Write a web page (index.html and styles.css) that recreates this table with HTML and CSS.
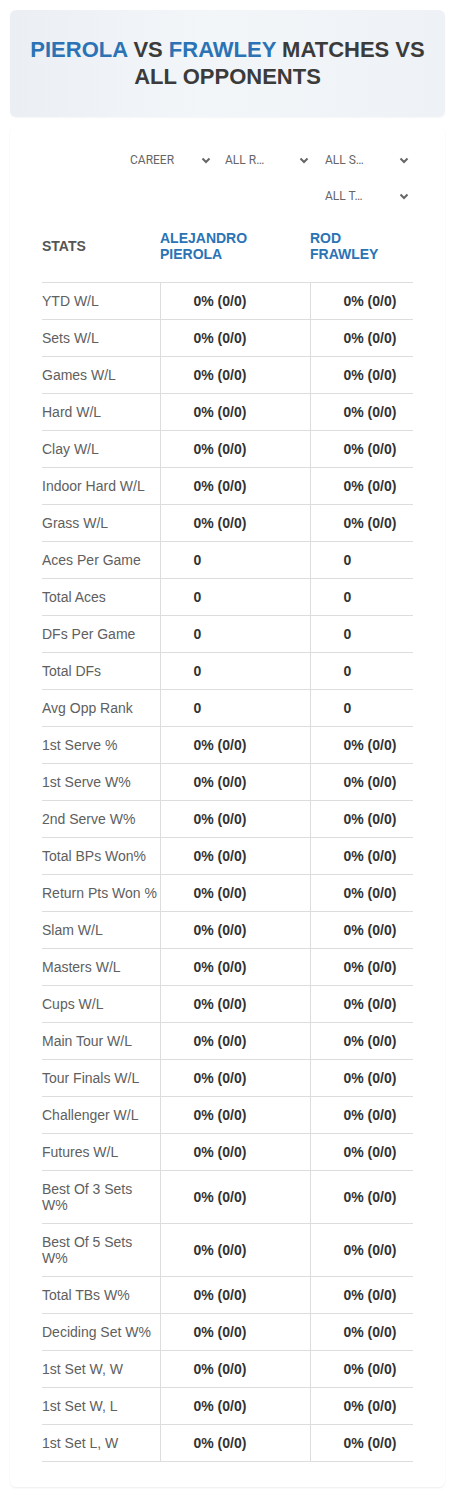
FILE: index.html
```html
<!DOCTYPE html>
<html>
<head>
	<title>Pierola vs Frawley</title>
	<link rel="stylesheet" href="styles.css">
</head>
<body>

	<div class="page-head">
		<h1 class="page-title"><span class="blue">PIEROLA</span> VS <span class="blue">FRAWLEY</span> MATCHES VS ALL OPPONENTS</h1>
	</div>

	<div class="stats-card">

		<div class="filters">
			<div class="filter filter-first">CAREER <svg class="chev" width="10" height="7" viewBox="0 0 10 7"><path d="M1.5 1.5 L5 5 L8.5 1.5" fill="none" stroke="#666" stroke-width="2"/></svg></div>
			<div class="filter">ALL R… <svg class="chev" width="10" height="7" viewBox="0 0 10 7"><path d="M1.5 1.5 L5 5 L8.5 1.5" fill="none" stroke="#666" stroke-width="2"/></svg></div>
			<div class="filter">ALL S… <svg class="chev" width="10" height="7" viewBox="0 0 10 7"><path d="M1.5 1.5 L5 5 L8.5 1.5" fill="none" stroke="#666" stroke-width="2"/></svg></div>
			<div class="filter">ALL T… <svg class="chev" width="10" height="7" viewBox="0 0 10 7"><path d="M1.5 1.5 L5 5 L8.5 1.5" fill="none" stroke="#666" stroke-width="2"/></svg></div>
		</div>

		<table class="stats-table">
			<colgroup>
				<col class="col-label">
				<col class="col-p1">
				<col class="col-p2">
			</colgroup>
			<thead>
				<tr>
					<th class="th-stats">STATS</th>
					<th class="th-player">ALEJANDRO<br>PIEROLA</th>
					<th class="th-player">ROD<br>FRAWLEY</th>
				</tr>
			</thead>
			<tbody id="rows"></tbody>
		</table>
	</div>

	<script type="text/javascript">
		var stats = [
			['YTD W/L', 'p'], ['Sets W/L', 'p'], ['Games W/L', 'p'], ['Hard W/L', 'p'],
			['Clay W/L', 'p'], ['Indoor Hard W/L', 'p'], ['Grass W/L', 'p'],
			['Aces Per Game', 'n'], ['Total Aces', 'n'], ['DFs Per Game', 'n'],
			['Total DFs', 'n'], ['Avg Opp Rank', 'n'],
			['1st Serve %', 'p'], ['1st Serve W%', 'p'], ['2nd Serve W%', 'p'],
			['Total BPs Won%', 'p'], ['Return Pts Won %', 'p'], ['Slam W/L', 'p'],
			['Masters W/L', 'p'], ['Cups W/L', 'p'], ['Main Tour W/L', 'p'],
			['Tour Finals W/L', 'p'], ['Challenger W/L', 'p'], ['Futures W/L', 'p'],
			['Best Of 3 Sets W%', 'p'], ['Best Of 5 Sets W%', 'p'], ['Total TBs W%', 'p'],
			['Deciding Set W%', 'p'], ['1st Set W, W', 'p'], ['1st Set W, L', 'p'],
			['1st Set L, W', 'p']
		];

		var html = '';
		for (var i = 0; i < stats.length; i++) {
			var v = stats[i][1] === 'p' ? '0% (0/0)' : '0';
			html += '<tr><td class="td-label">' + stats[i][0] + '</td>'
				+ '<td class="td-val">' + v + '</td>'
				+ '<td class="td-val">' + v + '</td></tr>';
		}
		document.getElementById('rows').innerHTML = html;
	</script>

</body>
</html>
```

FILE: styles.css
```css
body {
	margin: 0px;
	padding: 0px;
	background: #fff;
	font-family: "Liberation Sans", Arial, sans-serif;
	color: #333;
}

.page-head {
	margin: 10px 10px 0 10px;
	padding: 26px 18px 27px;
	border-radius: 6px;
	background: linear-gradient(90deg, #ebeff4 0%, #f3f6f9 45%, #eef2f6 100%);
	box-shadow: 0 1px 2px rgba(0, 0, 0, 0.04);
}

.page-title {
	margin: 0;
	font-size: 22px;
	line-height: 27px;
	font-weight: bold;
	text-align: center;
	color: #3b3b3b;
}

.blue {
	color: #2b73b5;
}

.stats-card {
	margin: 10px 10px 10px 10px;
	padding: 15px 32px 25px;
	background: #fff;
	border-radius: 6px;
	box-shadow: 0 1px 2px rgba(0, 0, 0, 0.07);
}

.filters {
	display: flex;
	flex-wrap: wrap;
	justify-content: flex-end;
	column-gap: 10px;
}

.filter {
	width: 90px;
	height: 36px;
	box-sizing: border-box;
	padding: 0 4px 0 2px;
	display: flex;
	align-items: center;
	justify-content: space-between;
	font-family: Roboto, "Noto Sans", sans-serif;
	font-size: 12px;
	color: #666;
}

.filter-first {
	padding-left: 7px;
	padding-right: 2px;
}

.stats-table {
	width: 100%;
	margin-top: 8px;
	border-collapse: collapse;
	table-layout: fixed;
}

.col-label {
	width: 118px;
}

.col-p1 {
	width: 150px;
}

.stats-table th {
	padding: 8px 0 20px 0;
	font-size: 14px;
	line-height: 16px;
	font-weight: bold;
	text-align: left;
	vertical-align: middle;
	border-bottom: 1px solid #dddddd;
}

.th-stats {
	color: #555;
}

.th-player {
	color: #2b73b5;
}

.stats-table td {
	padding: 10px 0;
	font-size: 14px;
	line-height: 16px;
	border-bottom: 1px solid #dddddd;
	vertical-align: middle;
}

.td-label {
	color: #606060;
}

.td-val {
	padding-left: 33px !important;
	font-weight: bold;
	color: #333;
	border-left: 1px solid #dddddd;
}
```
